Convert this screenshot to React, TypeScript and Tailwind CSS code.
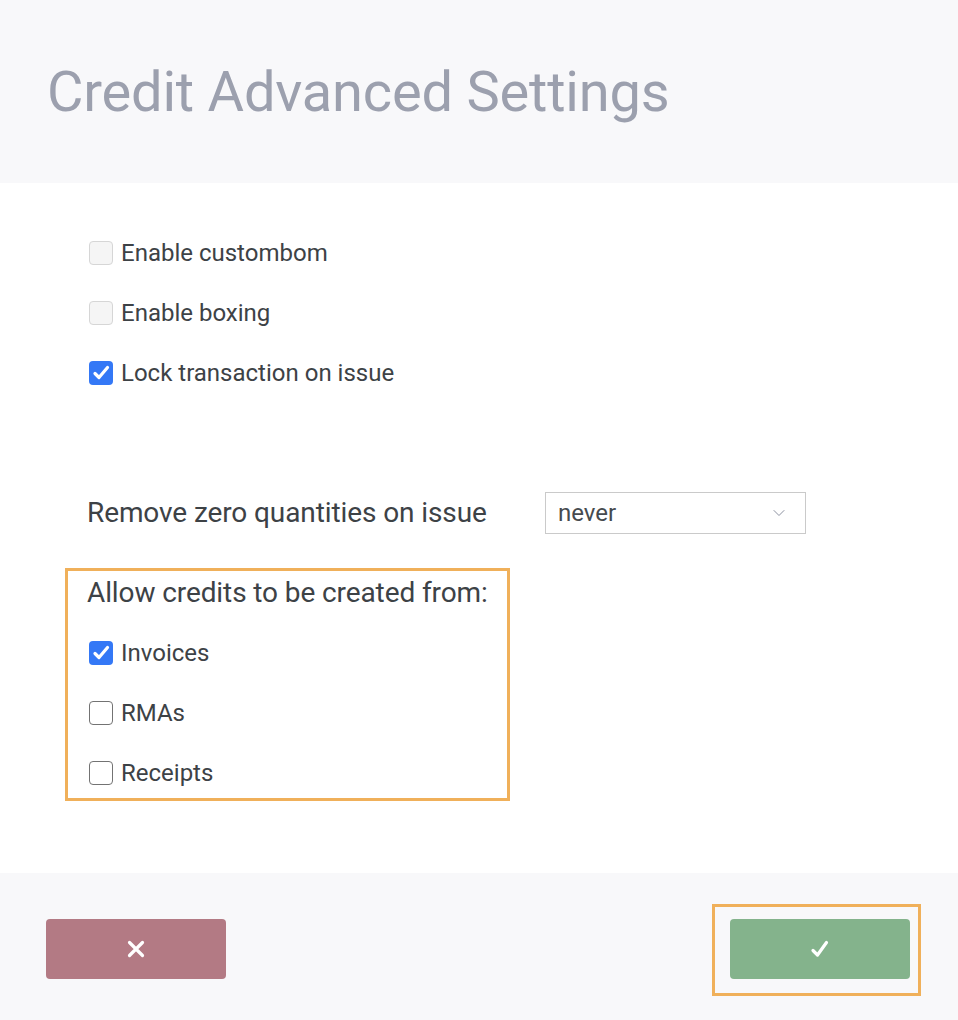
import { ChevronDown } from "lucide-react";

type BoxKind = "checked" | "disabled" | "empty";

function Box({ kind }: { kind: BoxKind }) {
	if (kind === "checked") {
		return (
			<span className="ml-[2px] flex h-6 w-6 items-center justify-center rounded-[4px] bg-[#3478f6]">
				<svg width="20" height="20" viewBox="0 0 20 20" fill="none">
					<path d="M4 10.5l4 4L16.5 4.5" stroke="white" strokeWidth="3.2" strokeLinecap="round" strokeLinejoin="round" />
				</svg>
			</span>
		);
	}
	if (kind === "disabled") {
		return <span className="ml-[2px] block h-6 w-6 rounded-[4px] border border-[#d6d6d6] bg-[#f5f5f5]" />;
	}
	return <span className="ml-[2px] block h-6 w-6 rounded-[4px] border-[1.5px] border-[#737373] bg-white" />;
}

function CheckRow({ label, kind }: { label: string; kind: BoxKind }) {
	return (
		<div className="flex h-6 items-center gap-2">
			<Box kind={kind} />
			<span className="text-[24px] leading-none text-[#3d4246]">{label}</span>
		</div>
	);
}

export default function App() {
	return (
		<div className="flex min-h-[1020px] w-full flex-col bg-white font-['Roboto',sans-serif]">
			{/* Header */}
			<div className="flex h-[183px] items-center bg-[#f8f8fa] pl-[47px]">
				<h1 className="text-[56px] leading-none tracking-[-0.2px] text-[#9ca0ae]">Credit Advanced Settings</h1>
			</div>

			{/* Body */}
			<div className="flex h-[690px] flex-col pl-[87px] pt-[58px]">
				<div className="flex flex-col gap-9">
					<CheckRow label="Enable custombom" kind="disabled" />
					<CheckRow label="Enable boxing" kind="disabled" />
					<CheckRow label="Lock transaction on issue" kind="checked" />
				</div>

				<div className="mt-[107px] flex h-[42px] items-center">
					<span className="w-[458px] text-[28px] leading-none tracking-[-0.1px] text-[#3d4246]">Remove zero quantities on issue</span>
					<div className="flex h-[42px] w-[261px] items-center justify-between border border-[#cacaca] bg-white pl-3 pr-4">
						<span className="text-[24px] leading-none text-[#464a4e]">never</span>
						<ChevronDown size={20} strokeWidth={1.2} className="text-[#8c91a0]" />
					</div>
				</div>

				<div className="-ml-[22px] mt-[34px] flex w-[445px] flex-col border-[3px] border-[#f0b05a] pb-[13px] pl-[19px] pt-[7px]">
					<span className="flex h-[30px] items-center text-[28px] leading-none tracking-[-0.1px] text-[#3d4246]">Allow credits to be created from:</span>
					<div className="mt-[33px] flex flex-col gap-9">
						<CheckRow label="Invoices" kind="checked" />
						<CheckRow label="RMAs" kind="empty" />
						<CheckRow label="Receipts" kind="empty" />
					</div>
				</div>
			</div>

			{/* Footer */}
			<div className="flex h-[147px] items-start justify-between bg-[#f8f8fa] pl-[46px] pr-[37px] pt-[31px]">
				<button className="mt-[15px] flex h-[60px] w-[180px] items-center justify-center rounded-[4px] bg-[#b37a84]">
					<svg width="20" height="20" viewBox="0 0 20 20" fill="none">
						<path d="M3.5 3.5l13 13M16.5 3.5l-13 13" stroke="white" strokeWidth="3.2" strokeLinecap="round" />
					</svg>
				</button>
				<div className="border-[3px] border-[#f0b05a] pb-[14px] pl-[15px] pr-2 pt-3">
					<button className="flex h-[60px] w-[180px] items-center justify-center rounded-[4px] bg-[#84b38c]">
						<svg width="22" height="22" viewBox="0 0 22 22" fill="none">
							<path d="M4 12.5l4.5 4.5L17.5 4.5" stroke="white" strokeWidth="3.2" strokeLinecap="round" strokeLinejoin="round" />
						</svg>
					</button>
				</div>
			</div>
		</div>
	);
}
